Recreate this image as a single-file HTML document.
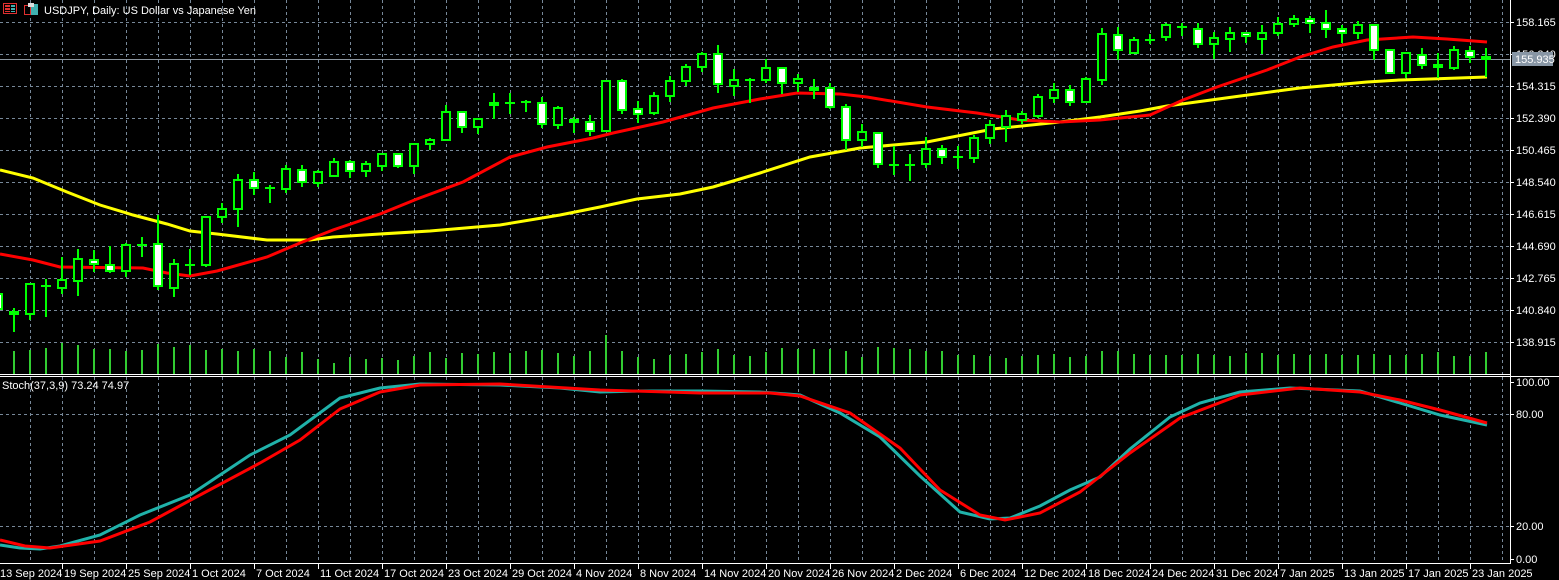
<!DOCTYPE html>
<html><head><meta charset="utf-8"><style>
html,body{margin:0;padding:0;background:#000;}
svg{display:block;font-family:"Liberation Sans",sans-serif;font-size:11px;}
</style></head><body>
<svg width="1559" height="580" viewBox="0 0 1559 580" xmlns="http://www.w3.org/2000/svg">
<rect width="1559" height="580" fill="#000"/>
<g stroke="#778899" stroke-width="1" stroke-dasharray="3,3" shape-rendering="crispEdges">
<path d="M0 22.5H1510M0 54.5H1510M0 86.5H1510M0 118.5H1510M0 150.5H1510M0 182.5H1510M0 214.5H1510M0 246.5H1510M0 278.5H1510M0 310.5H1510M0 342.5H1510M0 414.5H1510M0 526.5H1510"/>
<path d="M30.5 0V374M62.5 0V374M94.5 0V374M126.5 0V374M158.5 0V374M190.5 0V374M222.5 0V374M254.5 0V374M286.5 0V374M318.5 0V374M350.5 0V374M382.5 0V374M414.5 0V374M446.5 0V374M478.5 0V374M510.5 0V374M542.5 0V374M574.5 0V374M606.5 0V374M638.5 0V374M670.5 0V374M702.5 0V374M734.5 0V374M766.5 0V374M798.5 0V374M830.5 0V374M862.5 0V374M894.5 0V374M926.5 0V374M958.5 0V374M990.5 0V374M1022.5 0V374M1054.5 0V374M1086.5 0V374M1118.5 0V374M1150.5 0V374M1182.5 0V374M1214.5 0V374M1246.5 0V374M1278.5 0V374M1310.5 0V374M1342.5 0V374M1374.5 0V374M1406.5 0V374M1438.5 0V374M1470.5 0V374M1502.5 0V374"/>
<path d="M30.5 377V563M62.5 377V563M94.5 377V563M126.5 377V563M158.5 377V563M190.5 377V563M222.5 377V563M254.5 377V563M286.5 377V563M318.5 377V563M350.5 377V563M382.5 377V563M414.5 377V563M446.5 377V563M478.5 377V563M510.5 377V563M542.5 377V563M574.5 377V563M606.5 377V563M638.5 377V563M670.5 377V563M702.5 377V563M734.5 377V563M766.5 377V563M798.5 377V563M830.5 377V563M862.5 377V563M894.5 377V563M926.5 377V563M958.5 377V563M990.5 377V563M1022.5 377V563M1054.5 377V563M1086.5 377V563M1118.5 377V563M1150.5 377V563M1182.5 377V563M1214.5 377V563M1246.5 377V563M1278.5 377V563M1310.5 377V563M1342.5 377V563M1374.5 377V563M1406.5 377V563M1438.5 377V563M1470.5 377V563M1502.5 377V563"/>
</g>
<!-- current price line -->
<path d="M0 59.5H1510" stroke="#8c96a0" stroke-width="1" shape-rendering="crispEdges"/>
<!-- volumes -->
<g stroke="#32cd32" stroke-width="2" shape-rendering="crispEdges">
<path d="M-2 350V374M14 351V374M30 350V374M46 348V374M62 343V374M78 345V374M94 349V374M110 349V374M126 351V374M142 350V374M158 344V374M174 347V374M190 345V374M206 350V374M222 349V374M238 351V374M254 349V374M270 351V374M286 357V374M302 352V374M318 359V374M334 363V374M350 357V374M366 359V374M382 358V374M398 360V374M414 356V374M430 352V374M446 358V374M462 353V374M478 354V374M494 352V374M510 353V374M526 351V374M542 350V374M558 353V374M574 356V374M590 351V374M606 335V374M622 351V374M638 357V374M654 359V374M670 355V374M686 354V374M702 352V374M718 349V374M734 355V374M750 356V374M766 352V374M782 348V374M798 349V374M814 349V374M830 349V374M846 351V374M862 357V374M878 347V374M894 348V374M910 349V374M926 351V374M942 351V374M958 355V374M974 355V374M990 356V374M1006 358V374M1022 356V374M1038 355V374M1054 354V374M1070 357V374M1086 356V374M1102 351V374M1118 351V374M1134 354V374M1150 355V374M1166 355V374M1182 355V374M1198 354V374M1214 355V374M1230 356V374M1246 353V374M1262 353V374M1278 355V374M1294 354V374M1310 355V374M1326 354V374M1342 355V374M1358 355V374M1374 354V374M1390 355V374M1406 355V374M1422 354V374M1438 352V374M1454 356V374M1470 356V374M1486 352V374"/>
</g>
<!-- moving averages -->
<polyline fill="none" stroke="#ffff00" stroke-width="3" points="0,170 33,178 67,192 100,205 133,215 167,224 190,231 217,234 267,240 310,240 333,237 380,234 430,231 500,225 560,215 600,207 637,199 680,194 713,187 760,173 810,157 860,148 927,142 993,129 1060,122 1100,117 1140,111 1167,106 1233,97 1300,88 1367,82 1400,80 1430,79 1487,77"/>
<polyline fill="none" stroke="#ff0000" stroke-width="3" points="0,254 33,260 60,267 143,268 167,273 190,276 217,271 267,257 300,243 333,230 380,214 417,199 463,182 510,157 547,147 593,138 613,133 663,122 713,108 760,99 797,93 840,94 867,97 927,107 977,113 1020,120 1060,122 1100,120 1150,115 1183,100 1217,87 1267,70 1300,57 1333,47 1367,40 1413,37 1447,39 1487,42"/>
<!-- candles -->
<g stroke="#00ff00" stroke-width="2" shape-rendering="crispEdges">
<path d="M-2 290V312M14 308V332M30 284V320M46 279V317M62 257V294M78 249V296M94 250V272M110 246V273M126 243V277M142 237V257M158 215V290M174 259V297M190 249V275M206 216V267M222 203V223M238 174V227M254 172V195M270 185V203M286 165V193M302 165V187M318 170V187M334 158V177M350 160V178M366 161V177M382 154V171M398 153V168M414 144V174M430 138V150M446 105V140M462 111V133M478 119V134M494 93V119M510 93V114M526 100V112M542 97V128M558 106V129M574 117V133M590 115V136M606 80V132M622 79V114M638 101V123M654 92V115M670 76V102M686 64V86M702 52V72M718 45V93M734 69V96M750 78V103M766 59V83M782 68V94M798 74V92M814 79V99M830 83V109M846 104V150M862 124V147M878 132V168M894 146V175M910 154V181M926 137V168M942 145V164M958 146V169M974 135V163M990 120V144M1006 110V142M1022 111V124M1038 94V118M1054 83V103M1070 85V106M1086 77V103M1102 28V85M1118 27V60M1134 37V53M1150 34V44M1166 23V41M1182 23V36M1198 23V48M1214 32V59M1230 27V52M1246 32V43M1262 25V54M1278 17V36M1294 15V27M1310 16V33M1326 10V38M1342 25V43M1358 21V39M1374 25V60M1390 49V73M1406 52V78M1422 48V69M1438 53V78M1454 46V70M1470 46V63M1486 48V77"/>
<path d="M41 286H51M137 245H147M185 265H195M265 188H275M505 103H515M521 102H531M745 80H755M889 165H899M905 165H915M953 157H963M1145 40H1155M1177 27H1187"/>
</g>
<g stroke="#00ff00" stroke-width="2" fill="#000" shape-rendering="crispEdges">
<rect x="26" y="284" width="8" height="30"/><rect x="58" y="280" width="8" height="8"/><rect x="74" y="259" width="8" height="22"/><rect x="122" y="245" width="8" height="26"/><rect x="170" y="264" width="8" height="24"/><rect x="202" y="217" width="8" height="48"/><rect x="218" y="209" width="8" height="8"/><rect x="234" y="180" width="8" height="29"/><rect x="282" y="169" width="8" height="20"/><rect x="314" y="172" width="8" height="11"/><rect x="330" y="162" width="8" height="14"/><rect x="362" y="164" width="8" height="7"/><rect x="378" y="154" width="8" height="12"/><rect x="410" y="144" width="8" height="22"/><rect x="426" y="140" width="8" height="4"/><rect x="442" y="112" width="8" height="28"/><rect x="474" y="119" width="8" height="8"/><rect x="554" y="108" width="8" height="17"/><rect x="602" y="81" width="8" height="50"/><rect x="650" y="96" width="8" height="17"/><rect x="666" y="81" width="8" height="15"/><rect x="682" y="67" width="8" height="14"/><rect x="698" y="54" width="8" height="13"/><rect x="730" y="80" width="8" height="6"/><rect x="762" y="68" width="8" height="12"/><rect x="794" y="79" width="8" height="4"/><rect x="858" y="132" width="8" height="8"/><rect x="922" y="149" width="8" height="15"/><rect x="970" y="138" width="8" height="20"/><rect x="986" y="125" width="8" height="13"/><rect x="1002" y="116" width="8" height="11"/><rect x="1018" y="114" width="8" height="6"/><rect x="1034" y="97" width="8" height="19"/><rect x="1050" y="90" width="8" height="8"/><rect x="1082" y="79" width="8" height="23"/><rect x="1098" y="34" width="8" height="46"/><rect x="1130" y="40" width="8" height="13"/><rect x="1162" y="25" width="8" height="12"/><rect x="1210" y="38" width="8" height="6"/><rect x="1226" y="33" width="8" height="6"/><rect x="1258" y="33" width="8" height="6"/><rect x="1274" y="24" width="8" height="9"/><rect x="1290" y="19" width="8" height="5"/><rect x="1354" y="25" width="8" height="8"/><rect x="1402" y="53" width="8" height="20"/><rect x="1450" y="50" width="8" height="18"/>
</g>
<g stroke="#00ff00" stroke-width="2" fill="#fff" shape-rendering="crispEdges">
<rect x="-6" y="294" width="8" height="15"/><rect x="10" y="312" width="8" height="2"/><rect x="90" y="260" width="8" height="4"/><rect x="106" y="265" width="8" height="6"/><rect x="154" y="244" width="8" height="42"/><rect x="250" y="180" width="8" height="8"/><rect x="298" y="170" width="8" height="12"/><rect x="346" y="162" width="8" height="9"/><rect x="394" y="154" width="8" height="12"/><rect x="458" y="112" width="8" height="15"/><rect x="490" y="103" width="8" height="2"/><rect x="538" y="103" width="8" height="21"/><rect x="570" y="120" width="8" height="2"/><rect x="586" y="122" width="8" height="9"/><rect x="618" y="81" width="8" height="29"/><rect x="634" y="109" width="8" height="5"/><rect x="714" y="54" width="8" height="30"/><rect x="778" y="68" width="8" height="15"/><rect x="810" y="88" width="8" height="2"/><rect x="826" y="88" width="8" height="19"/><rect x="842" y="107" width="8" height="33"/><rect x="874" y="133" width="8" height="31"/><rect x="938" y="149" width="8" height="8"/><rect x="1066" y="90" width="8" height="12"/><rect x="1114" y="35" width="8" height="15"/><rect x="1194" y="29" width="8" height="15"/><rect x="1242" y="33" width="8" height="3"/><rect x="1306" y="19" width="8" height="4"/><rect x="1322" y="23" width="8" height="6"/><rect x="1338" y="29" width="8" height="4"/><rect x="1370" y="25" width="8" height="25"/><rect x="1386" y="50" width="8" height="23"/><rect x="1418" y="55" width="8" height="10"/><rect x="1434" y="65" width="8" height="2"/><rect x="1466" y="51" width="8" height="6"/><rect x="1482" y="57" width="8" height="2"/>
</g>
<!-- separators / axes -->
<g stroke="#fff" stroke-width="1" shape-rendering="crispEdges">
<path d="M0 374.5H1510M0 376.5H1559M0 563.5H1510M1510.5 0V564"/>
<path d="M1510 22.5H1514M1510 54.5H1514M1510 86.5H1514M1510 118.5H1514M1510 150.5H1514M1510 182.5H1514M1510 214.5H1514M1510 246.5H1514M1510 278.5H1514M1510 310.5H1514M1510 342.5H1514M1510 382.5H1514M1510 414.5H1514M1510 526.5H1514M1510 559.5H1514"/>
<path d="M62.5 563V569M126.5 563V569M190.5 563V569M254.5 563V569M318.5 563V569M382.5 563V569M446.5 563V569M510.5 563V569M574.5 563V569M638.5 563V569M702.5 563V569M766.5 563V569M830.5 563V569M894.5 563V569M958.5 563V569M1022.5 563V569M1086.5 563V569M1150.5 563V569M1214.5 563V569M1278.5 563V569M1342.5 563V569M1406.5 563V569M1470.5 563V569"/>
</g>
<!-- stochastic -->
<polyline fill="none" stroke="#20b2aa" stroke-width="3" points="0,545 20,548 40,549 60,546 100,535 140,515 190,495 250,455 290,435 340,398 380,388 420,384 500,385 560,388 600,392 640,391 700,391 760,392 800,395 840,413 880,437 920,476 960,512 990,519 1010,518 1040,506 1070,490 1100,477 1130,449 1170,417 1200,403 1240,392 1290,388 1360,391 1400,403 1440,415 1487,425"/>
<polyline fill="none" stroke="#ff0000" stroke-width="3" points="0,540 25,546 50,548 100,541 150,522 200,495 260,463 300,440 340,409 380,392 420,385 500,384 600,390 700,393 770,393 800,396 850,413 900,448 940,490 980,515 1005,520 1040,513 1080,492 1130,453 1180,418 1240,395 1300,388 1360,392 1400,400 1440,410 1487,423"/>
<!-- price labels -->
<g fill="#fff">
<text x="1516" y="26">158.165</text><text x="1516" y="58">156.240</text><text x="1516" y="90">154.315</text><text x="1516" y="122">152.390</text><text x="1516" y="154">150.465</text><text x="1516" y="186">148.540</text><text x="1516" y="218">146.615</text><text x="1516" y="250">144.690</text><text x="1516" y="282">142.765</text><text x="1516" y="314">140.840</text><text x="1516" y="346">138.915</text>
<text x="1516" y="386">100.00</text><text x="1516" y="418">80.00</text><text x="1516" y="530">20.00</text><text x="1516" y="563">0.00</text>
</g>
<rect x="1512" y="52" width="41" height="14" fill="#8896a5"/>
<text x="1515" y="63" fill="#fff">155.935</text>
<!-- date labels -->
<g fill="#fff">
<text x="0" y="577">13 Sep 2024</text><text x="64" y="577">19 Sep 2024</text><text x="128" y="577">25 Sep 2024</text><text x="192" y="577">1 Oct 2024</text><text x="256" y="577">7 Oct 2024</text><text x="320" y="577">11 Oct 2024</text><text x="384" y="577">17 Oct 2024</text><text x="448" y="577">23 Oct 2024</text><text x="512" y="577">29 Oct 2024</text><text x="576" y="577">4 Nov 2024</text><text x="640" y="577">8 Nov 2024</text><text x="704" y="577">14 Nov 2024</text><text x="768" y="577">20 Nov 2024</text><text x="832" y="577">26 Nov 2024</text><text x="896" y="577">2 Dec 2024</text><text x="960" y="577">6 Dec 2024</text><text x="1024" y="577">12 Dec 2024</text><text x="1088" y="577">18 Dec 2024</text><text x="1152" y="577">24 Dec 2024</text><text x="1216" y="577">31 Dec 2024</text><text x="1280" y="577">7 Jan 2025</text><text x="1344" y="577">13 Jan 2025</text><text x="1408" y="577">17 Jan 2025</text><text x="1472" y="577">23 Jan 2025</text>
</g>
<!-- header -->
<g shape-rendering="crispEdges">
<rect x="3.5" y="3.5" width="13" height="10" fill="none" stroke="#e03030"/>
<rect x="5" y="5" width="5" height="2" fill="#e03030"/><rect x="11" y="5" width="4" height="2" fill="#40b0b0"/>
<rect x="5" y="8" width="5" height="2" fill="#e03030"/><rect x="11" y="8" width="4" height="2" fill="#40b0b0"/>
<rect x="5" y="11" width="5" height="1" fill="#e03030"/><rect x="11" y="11" width="4" height="1" fill="#40b0b0"/>
<rect x="24.5" y="5.5" width="6" height="9" fill="none" stroke="#e03030"/>
<rect x="31" y="4" width="7" height="11" fill="#40b0b0"/>
<rect x="28" y="3" width="6" height="4" fill="#ddd"/>
</g>
<text x="44" y="14" fill="#fff">USDJPY, Daily:  US Dollar vs Japanese Yen</text>
<text x="2" y="389" fill="#fff">Stoch(37,3,9) 73.24 74.97</text>
</svg>
</body></html>
